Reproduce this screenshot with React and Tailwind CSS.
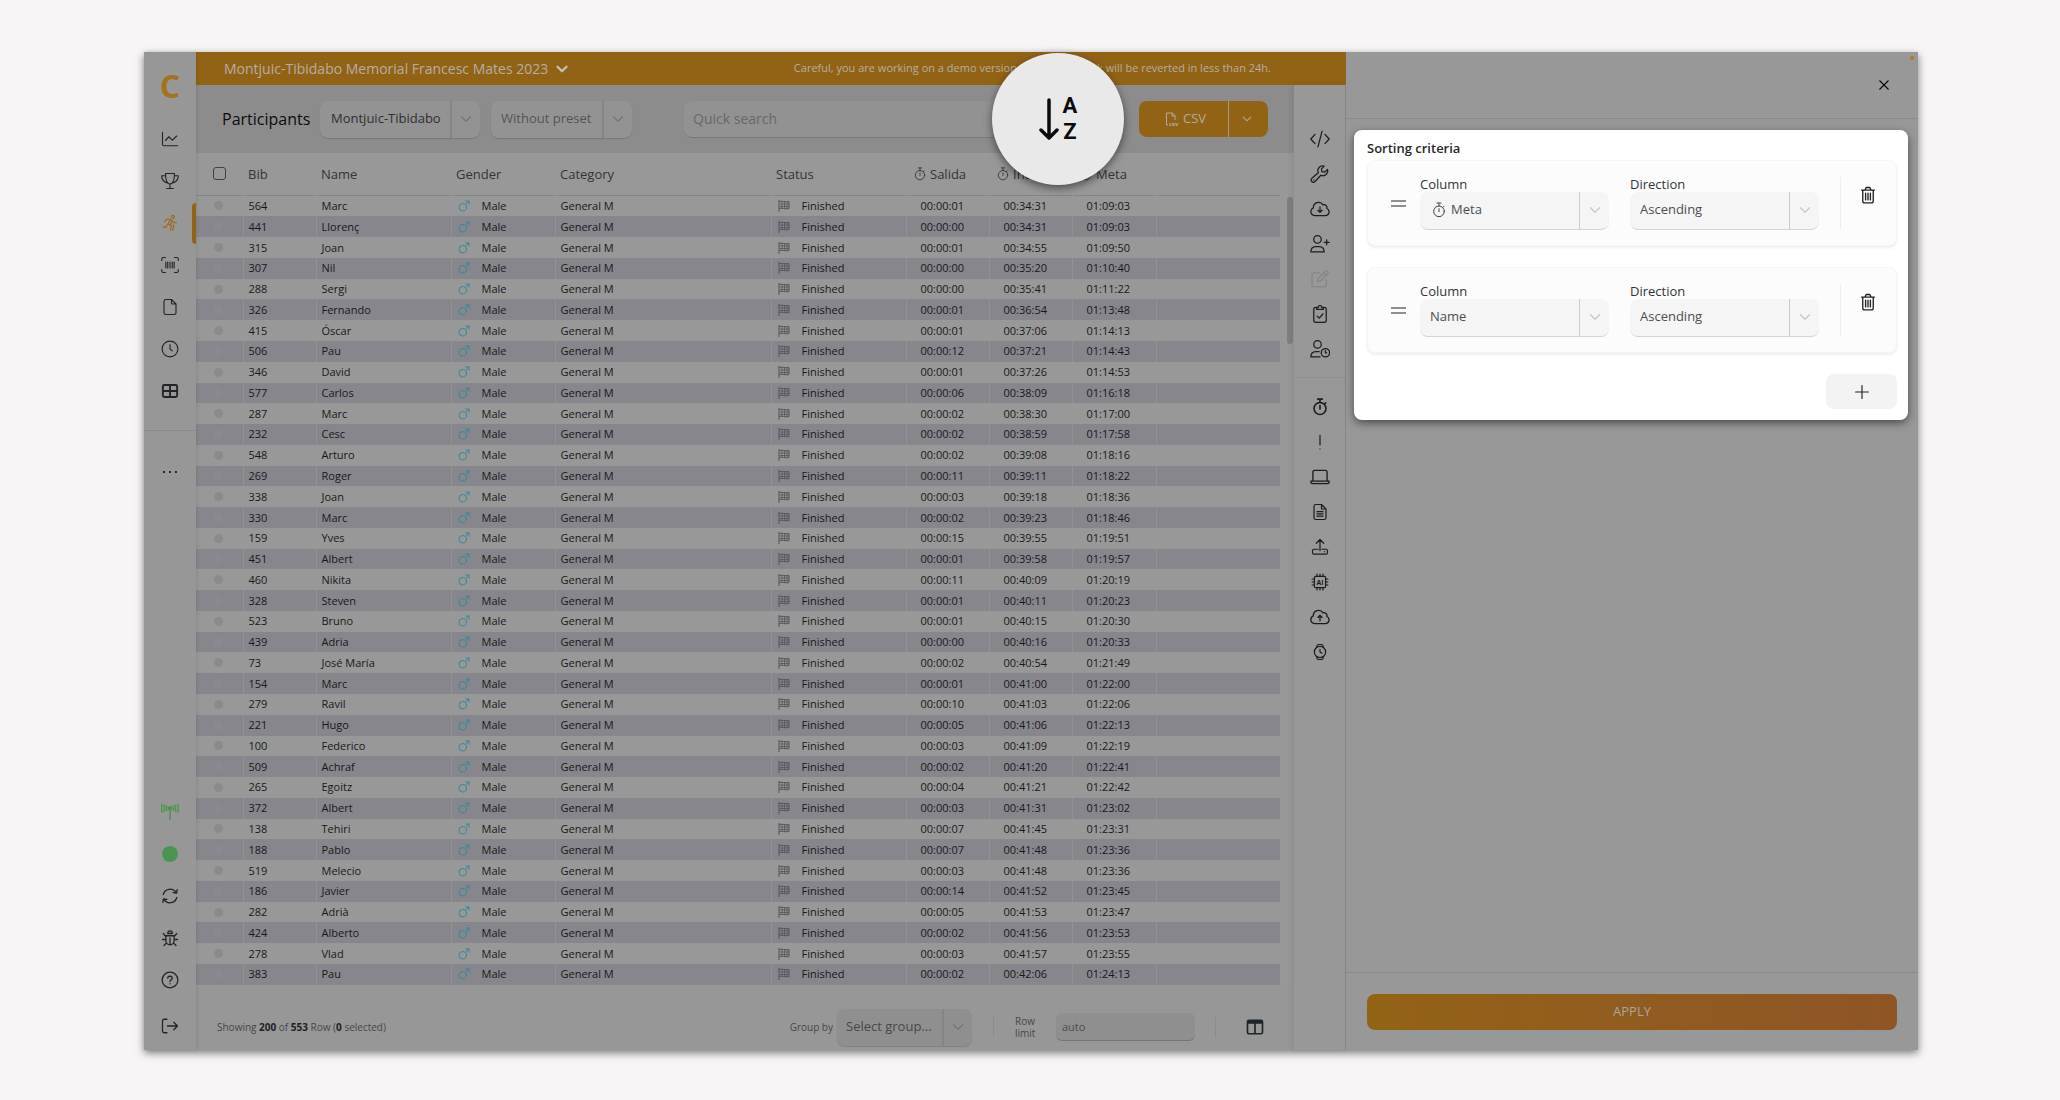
import { BsChevronDown } from 'react-icons/bs';

const participants = [
  [564, 'Marc', '00:00:01', '00:34:31', '01:09:03'],
  [441, 'Llorenç', '00:00:00', '00:34:31', '01:09:03'],
  [315, 'Joan', '00:00:01', '00:34:55', '01:09:50'],
  [307, 'Nil', '00:00:00', '00:35:20', '01:10:40'],
  [288, 'Sergi', '00:00:00', '00:35:41', '01:11:22'],
  [326, 'Fernando', '00:00:01', '00:36:54', '01:13:48'],
  [415, 'Óscar', '00:00:01', '00:37:06', '01:14:13'],
  [506, 'Pau', '00:00:12', '00:37:21', '01:14:43'],
  [346, 'David', '00:00:01', '00:37:26', '01:14:53'],
  [577, 'Carlos', '00:00:06', '00:38:09', '01:16:18'],
  [287, 'Marc', '00:00:02', '00:38:30', '01:17:00'],
  [232, 'Cesc', '00:00:02', '00:38:59', '01:17:58'],
  [548, 'Arturo', '00:00:02', '00:39:08', '01:18:16'],
  [269, 'Roger', '00:00:11', '00:39:11', '01:18:22'],
  [338, 'Joan', '00:00:03', '00:39:18', '01:18:36'],
  [330, 'Marc', '00:00:02', '00:39:23', '01:18:46'],
  [159, 'Yves', '00:00:15', '00:39:55', '01:19:51'],
  [451, 'Albert', '00:00:01', '00:39:58', '01:19:57'],
  [460, 'Nikita', '00:00:11', '00:40:09', '01:20:19'],
  [328, 'Steven', '00:00:01', '00:40:11', '01:20:23'],
  [523, 'Bruno', '00:00:01', '00:40:15', '01:20:30'],
  [439, 'Adria', '00:00:00', '00:40:16', '01:20:33'],
  [73, 'José María', '00:00:02', '00:40:54', '01:21:49'],
  [154, 'Marc', '00:00:01', '00:41:00', '01:22:00'],
  [279, 'Ravil', '00:00:10', '00:41:03', '01:22:06'],
  [221, 'Hugo', '00:00:05', '00:41:06', '01:22:13'],
  [100, 'Federico', '00:00:03', '00:41:09', '01:22:19'],
  [509, 'Achraf', '00:00:02', '00:41:20', '01:22:41'],
  [265, 'Egoitz', '00:00:04', '00:41:21', '01:22:42'],
  [372, 'Albert', '00:00:03', '00:41:31', '01:23:02'],
  [138, 'Tehiri', '00:00:07', '00:41:45', '01:23:31'],
  [188, 'Pablo', '00:00:07', '00:41:48', '01:23:36'],
  [519, 'Melecio', '00:00:03', '00:41:48', '01:23:36'],
  [186, 'Javier', '00:00:14', '00:41:52', '01:23:45'],
  [282, 'Adrià', '00:00:05', '00:41:53', '01:23:47'],
  [424, 'Alberto', '00:00:02', '00:41:56', '01:23:53'],
  [278, 'Vlad', '00:00:03', '00:41:57', '01:23:55'],
  [383, 'Pau', '00:00:02', '00:42:06', '01:24:13'],
];

// All line icons share a 24px grid
function Icon({ children, className = 'size-5', weight = 1.5 }) {
  return (
    <svg
      viewBox="0 0 24 24"
      fill="none"
      stroke="currentColor"
      strokeWidth={weight}
      strokeLinecap="round"
      strokeLinejoin="round"
      className={className}
      aria-hidden="true"
    >
      {children}
    </svg>
  );
}

const cloud = 'M5.5 20h13a4.5 4.5 0 0 0 1.7-8.6 3.6 3.6 0 0 0-4.6-4.4A6.3 6.3 0 0 0 4 10.6 4.9 4.9 0 0 0 5.5 20Z';

const icons = {
  chart: <path d="M2 3v16a2 2 0 0 0 2 2h18M6 14l4.5-5 4.5 4.5L21 8" />,
  trophy: <path d="M6 2h12c0 7-1.5 14-6 14S6 9 6 2ZM6 5H1c0 5 3 8.5 7.5 9.5M18 5h5c0 5-3 8.5-7.5 9.5M12 16v6M7.5 22h9" />,
  runner: (
    <>
      <circle cx="16" cy="3.8" r="2" />
      <path d="M5 10.5 7.500 7h5l2 1.500 2.500 3h3.500M12.500 7.500 9.500 13l4.500 3-1.500 6M15 9.500l-2.500 4.500M8.500 14l-1.500 3.500H3M16.500 14.500l.5 2-1.500 5.500" />
    </>
  ),
  barcode: (
    <path d="M1 6V4a2 2 0 0 1 2-2h3M18 2h3a2 2 0 0 1 2 2v2M23 18v2a2 2 0 0 1-2 2h-3M6 22H3a2 2 0 0 1-2-2v-2M6.500 8v8M9 8v8M12 8v8M15 8v8M17.500 8v8" />
  ),
  file: <path d="M14 2H6.500A2.500 2.500 0 0 0 4 4.500v15A2.500 2.500 0 0 0 6.500 22h11a2.500 2.500 0 0 0 2.500-2.500V8l-6-6ZM14 2v4.500A1.500 1.500 0 0 0 15.500 8H20" />,
  clock: (
    <>
      <circle cx="12" cy="12" r="10.5" />
      <path d="M12 6v6l3 2.500" />
    </>
  ),
  grid: (
    <>
      <rect x="2.5" y="4" width="19" height="16" rx="2" />
      <path d="M2.500 12h19M12 4v16" />
    </>
  ),
  sync: <path d="M3 10a9.300 9.300 0 0 1 17-2.500M21.500 3.500 20.800 8.200l-4.600-.7M21 14a9.300 9.300 0 0 1-17 2.500M2.500 20.500l.7-4.700 4.600.7" />,
  bug: (
    <path d="M6.500 9h11v6.500a5.500 5.500 0 0 1-11 0V9ZM12 12v9M9 5.500a3 3 0 0 1 6 0V6H9v-.5ZM6.500 10 3 6M17.500 10 21 6M6.500 14H2M17.500 14H22M7.500 18.500 4 22M16.500 18.500 20 22" />
  ),
  help: (
    <>
      <circle cx="12" cy="12" r="10.5" />
      <path d="M9 9.500A2.500 2.500 0 0 1 11.500 7h1a2.500 2.500 0 0 1 1 4.800c-1 .5-1.500 1-1.500 2.200M12 17v.1" />
    </>
  ),
  logout: <path d="M8 3H4.500A2.500 2.500 0 0 0 2 5.500v13A2.500 2.500 0 0 0 4.500 21H8M8.500 12H22M17 7l5 5-5 5" />,
  code: <path d="m6 6.500-5 5.500 5 5.500M18 6.500l5 5.500-5 5.500M14.500 2.500l-5 19" />,
  wrench: (
    <>
      <path d="M21 6.500a5.800 5.800 0 0 1-8 7l-7 7.500a2.600 2.600 0 0 1-3.800-3.800L10 10.500a5.800 5.800 0 0 1 7-8l-3.200 3.300.5 3.400 3.400.5L21 6.500Z" />
      <path d="M4.500 19v.1" />
    </>
  ),
  cloudDown: <path d={`${cloud}M12 9.500v6.500M9.500 13.500 12 16l2.500-2.500`} />,
  cloudUp: <path d={`${cloud}M12 16.500V10M9.500 12.500 12 10l2.500 2.500`} />,
  userPlus: (
    <>
      <circle cx="9" cy="6.5" r="4.5" />
      <path d="M1 21.500c0-4 2.500-6.500 6-6.500h4c3.500 0 6 2.500 6 6.500H1ZM20 7v6M17 10h6" />
    </>
  ),
  userClock: (
    <>
      <circle cx="9" cy="6.5" r="4.5" />
      <path d="M12 21.500H1c0-4 2.500-6.500 6-6.500h4" />
      <circle cx="18.5" cy="16.5" r="5" />
      <path d="M18.500 14v2.500h1.500" />
    </>
  ),
  edit: <path d="M11 4.500H5A2.500 2.500 0 0 0 2.500 7v12A2.500 2.500 0 0 0 5 21.500h12a2.500 2.500 0 0 0 2.500-2.500v-6M9 15l.8-3.800 8.500-8.500a2 2 0 0 1 3 3l-8.500 8.500L9 15ZM16.500 4.500l3 3" />,
  clipboard: <path d="M8.500 4H7a2.500 2.500 0 0 0-2.500 2.500v13A2.500 2.500 0 0 0 7 22h10a2.500 2.500 0 0 0 2.500-2.500v-13A2.500 2.500 0 0 0 17 4h-1.500M8 6.500h8c0-1.500-1-2.500-2-2.500a2 2 0 0 0-4 0c-1 0-2 1-2 2.500ZM8.500 14.500l2.500 2.500 4.500-5" />,
  stopwatch: (
    <>
      <circle cx="12" cy="14" r="8" />
      <path d="M12 6V2M9 1.500h6M12 10v4.500M18 8l1.500-1.500" />
    </>
  ),
  alert: <path d="M12 3v13M12 21v.1" />,
  laptop: <path d="M3.500 16.500V6A2 2 0 0 1 5.500 4h13a2 2 0 0 1 2 2v10.500M1 17h22v1a2 2 0 0 1-2 2H3a2 2 0 0 1-2-2v-1Z" />,
  fileText: (
    <path d="M14 2H6.500A2.500 2.500 0 0 0 4 4.500v15A2.500 2.500 0 0 0 6.500 22h11a2.500 2.500 0 0 0 2.500-2.500V8l-6-6ZM14 2v6h6M8 11.500h8M8 14.500h8M8 17.500h8" />
  ),
  upload: <path d="M9.500 15H4a2 2 0 0 0-2 2v2.500a2 2 0 0 0 2 2h16a2 2 0 0 0 2-2V17a2 2 0 0 0-2-2h-5.500M12 17V2M7 7l5-5 5 5M18 18.200h.1" />,
  chip: (
    <>
      <rect x="4.5" y="4.5" width="15" height="15" rx="2" />
      <path d="M8 4V1.500M12 4V1.500M16 4V1.500M8 22.500V20M12 22.500V20M16 22.500V20M4 8H1.500M4 12H1.500M4 16H1.500M22.500 8H20M22.500 12H20M22.500 16H20" />
      <text x="12" y="15.500" textAnchor="middle" fontSize="9" fontWeight="700" stroke="none" fill="currentColor">AI</text>
    </>
  ),
  watch: (
    <>
      <circle cx="12" cy="12" r="7.5" />
      <path d="M12 8.500V12l2.500 1.500M7.500 6 8 3.500A2 2 0 0 1 10 2h4a2 2 0 0 1 2 1.500l.5 2.500M7.500 18l.5 2.500A2 2 0 0 0 10 22h4a2 2 0 0 0 2-1.500l.5-2.500" />
    </>
  ),
  trash: <path d="M3.500 5.500h17M5 5.500V20a2.500 2.500 0 0 0 2.500 2.500h9A2.500 2.500 0 0 0 19 20V5.500M8 5.500 9.500 2h5L16 5.500M8.800 9.500v9M12 9.500v9M15.200 9.500v9" />,
  columns: <path d="M4 3h16a2 2 0 0 1 2 2v14a2 2 0 0 1-2 2H4a2 2 0 0 1-2-2V5a2 2 0 0 1 2-2ZM2 5h20M2 6.500h20M12 6v15" />,
  male: (
    <>
      <circle cx="9.5" cy="14.500" r="7.5" />
      <path d="M15 9 22 2M15.500 2H22v6.500" />
    </>
  ),
};

function CheckeredFlag() {
  return (
    <svg viewBox="0 0 12 12" className="size-3 text-[#55555a]" fill="none" stroke="currentColor" aria-hidden="true">
      <path d="M1 0v12" strokeWidth="1" />
      <path d="M1 1.500c3-1 6 1 10 0v7c-4 1-7-1-10 0" strokeWidth="1" />
      <path d="M1.500 4h9.500M1.500 6.500h9.500M4 1v7.500M6.500 1v7.500M9 1.500v7.500" strokeWidth="0.800" />
    </svg>
  );
}

const mainNav = [
  ['Analytics', 'chart'],
  ['Results', 'trophy'],
  ['Participants', 'runner'],
  ['Scanner', 'barcode'],
  ['Documents', 'file'],
  ['Times', 'clock'],
  ['Tables', 'grid'],
];

const toolsTop = [
  ['Code', 'code'],
  ['Tools', 'wrench'],
  ['Download', 'cloudDown'],
  ['Add participant', 'userPlus'],
  ['Edit', 'edit'],
  ['Check', 'clipboard'],
  ['Participant times', 'userClock'],
];

const toolsBottom = [
  ['Stopwatch', 'stopwatch'],
  ['Incidents', 'alert'],
  ['Devices', 'laptop'],
  ['Report', 'fileText'],
  ['Upload', 'upload'],
  ['AI', 'chip'],
  ['Cloud upload', 'cloudUp'],
  ['Watch', 'watch'],
];

function Sidebar() {
  return (
    <nav className="z-10 flex w-[52px] shrink-0 flex-col items-center bg-[#979797] text-[#222427] shadow-[1px_0_3px_#0000001a]">
      <a href="#home" className="h-[66px] pt-3 text-[32px] leading-[44px] font-bold text-[#a5721a]">C</a>
      <div className="w-full">
        {mainNav.map(([label, name]) => (
          <a
            key={name}
            href={`#${name}`}
            aria-label={label}
            className={
              name === 'runner'
                ? 'relative flex h-[42px] items-center justify-center text-[#a06a13] after:absolute after:right-0 after:h-[41px] after:w-1 after:rounded-l after:bg-[#936315]'
                : 'flex h-[42px] items-center justify-center'
            }
          >
            <Icon className="size-[18px]" weight={name === 'grid' ? 2.5 : 1.5}>{icons[name]}</Icon>
          </a>
        ))}
      </div>
      <hr className="mt-[18px] w-full border-[#8b8b8b]" />
      <button aria-label="More" className="mt-5 flex h-[42px] items-center gap-1">
        <span className="size-[2px] rounded-full bg-black"></span>
        <span className="size-[2px] rounded-full bg-black"></span>
        <span className="size-[2px] rounded-full bg-black"></span>
      </button>
      <div className="mt-auto flex flex-col items-center pb-[3px]">
        <span className="flex h-[42px] items-center text-[#4c9550]">
          <Icon className="size-[18px]" weight={2}>
            <circle cx="12" cy="7" r="2" fill="currentColor" />
            <path d="M12 8v14M7.500 4v6M16.500 4v6M4.500 3v8M19.500 3v8M1.500 2c-1 3-1 7 0 10M22.500 2c1 3 1 7 0 10" />
          </Icon>
        </span>
        <span className="flex h-[42px] items-center">
          <span className="size-4 rounded-full bg-[#4c9550]"></span>
        </span>
        <button aria-label="Sync" className="flex h-[42px] items-center"><Icon className="size-[18px]" weight={1.7}>{icons.sync}</Icon></button>
        <button aria-label="Report a bug" className="flex h-[42px] items-center"><Icon className="size-[18px]" weight={1.7}>{icons.bug}</Icon></button>
        <button aria-label="Help" className="flex h-[42px] items-center"><Icon className="size-[18px]" weight={1.7}>{icons.help}</Icon></button>
        <button aria-label="Log out" className="mt-1 flex h-[42px] items-center"><Icon className="size-[18px]" weight={1.7}>{icons.logout}</Icon></button>
      </div>
    </nav>
  );
}

function DimSelect({ label, options, className, textClass }) {
  return (
    <div className={`flex h-[37px] shrink-0 rounded-lg shadow-[0_1px_1px_#00000026] ${className}`}>
      <select aria-label={label} className={`min-w-0 flex-1 appearance-none bg-transparent text-[13px] outline-none ${textClass}`}>
        {options.map(option => <option key={option}>{option}</option>)}
      </select>
      <span className="flex w-[30px] items-center justify-center border-l-2 border-[#858585] text-[#737373]">
        <BsChevronDown className="size-3 stroke-1" />
      </span>
    </div>
  );
}

function Toolbar() {
  return (
    <div className="flex h-[68px] shrink-0 items-center bg-[#8c8c8c] pr-[26px] pl-[26px]">
      <h1 className="w-[98px] text-base text-[#0c0c0d]">Participants</h1>
      <DimSelect label="Event" options={['Montjuic-Tibidabo']} className="w-[160px] bg-[#939393]" textClass="pl-[11px] text-[#2e2f31]" />
      <DimSelect label="Preset" options={['Without preset']} className="ml-[11px] w-[141px] bg-[#939393]" textClass="pl-[10px] text-[#525457]" />
      <input
        type="search"
        aria-label="Quick search"
        placeholder="Quick search"
        className="ml-[52px] h-[37px] min-w-0 flex-1 rounded-lg border-b border-[#777] bg-[#929292] px-[9px] text-sm outline-none placeholder:text-[#66696b]"
      />
      {/* Sort button, enlarged above the dimmed toolbar */}
      <div className="relative h-[37px] w-[81px] shrink-0">
        <button
          aria-label="Sort"
          className="absolute top-1/2 left-0 z-20 flex size-[132px] -translate-x-1/2 -translate-y-1/2 items-center justify-center gap-1 rounded-full bg-[#e9e9e9] text-[#0b0b0b] shadow-[0_3px_8px_#00000080]"
        >
          <svg viewBox="0 0 20 42" className="h-[42px] w-5" fill="none" stroke="currentColor" strokeWidth="3.500" strokeLinecap="round" strokeLinejoin="round">
            <path d="M10 2v37M2 32l8 8 8-8" />
          </svg>
          <span className="flex flex-col text-center font-[Roboto,sans-serif] text-[22px] leading-[26px] font-bold">
            <span>A</span>
            <span>Z</span>
          </span>
        </button>
      </div>
      <div className="flex h-9 w-[129px] shrink-0 rounded-lg bg-[#936315] text-[#aeaba6]">
        <button className="flex flex-1 items-center justify-center gap-1 pl-1 text-[13px]">
          <svg viewBox="0 0 14 14" className="size-[14px]" fill="none" stroke="currentColor" aria-hidden="true">
            <path d="M3 13H1.500V1h6L10 3.500V8M7 1v3h3" />
            <text x="4" y="13.500" fontSize="6" fontWeight="700" stroke="none" fill="currentColor">csv</text>
          </svg>
          CSV
        </button>
        <button aria-label="More export options" className="flex w-10 items-center justify-center border-l border-[#a39a88] pr-1">
          <BsChevronDown className="size-[10px] stroke-1" />
        </button>
      </div>
    </div>
  );
}

function TimeHeader({ label }) {
  return (
    <th className="pl-[7px] text-left font-normal">
      <span className="flex items-center gap-[3px]">
        <Icon className="size-[14px] shrink-0">{icons.stopwatch}</Icon>
        {label}
      </span>
    </th>
  );
}

function ParticipantsTable() {
  return (
    <div className="flex min-h-0 flex-1 bg-[#989898]">
      <table className="h-full w-full min-w-0 flex-1 table-fixed border-collapse text-[11px] leading-4 whitespace-nowrap text-[#17181a]">
        <colgroup>
          <col className="w-[47px]" />
          <col className="w-[73px]" />
          <col className="w-[135px]" />
          <col className="w-[104px]" />
          <col className="w-[216px]" />
          <col className="w-[135px]" />
          <col className="w-[83px]" />
          <col className="w-[83px]" />
          <col className="w-[84px]" />
          <col />
        </colgroup>
        <thead className="text-[13px] text-[#323437]">
          <tr className="h-[42px] border-b border-[#858585]">
            <th className="pl-[17px] text-left">
              <input type="checkbox" aria-label="Select all" className="block size-[13px] appearance-none rounded-[3px] border border-[#3f4144]" />
            </th>
            <th className="pl-[5px] text-left font-normal">Bib</th>
            <th className="pl-[5px] text-left font-normal">Name</th>
            <th className="pl-[5px] text-left font-normal">Gender</th>
            <th className="pl-[5px] text-left font-normal">Category</th>
            <th className="pl-[5px] text-left font-normal">Status</th>
            <TimeHeader label="Salida" />
            <TimeHeader label="Intermedio" />
            <TimeHeader label="Meta" />
            <th></th>
          </tr>
        </thead>
        <tbody>
          {participants.map(([bib, name, start, half, finish]) => (
            <tr key={bib} className="group even:bg-[#87868d]">
              <td className="pl-[18px]">
                <span className="block size-[9px] rounded-full bg-[#8b8b8b] group-even:bg-[#8a898f]"></span>
              </td>
              <td className="border-l border-transparent pl-[5px] group-even:border-[#929196]">{bib}</td>
              <td className="border-l border-transparent pl-[5px] group-even:border-[#929196]">{name}</td>
              <td className="border-l border-transparent pl-[6px] group-even:border-[#929196]">
                <span className="flex items-center gap-3">
                  <Icon className="size-3 text-[#2f8a9c]" weight={2}>{icons.male}</Icon>
                  Male
                </span>
              </td>
              <td className="border-l border-transparent pl-[5px] group-even:border-[#929196]">General M</td>
              <td className="border-l border-transparent pl-[6px] group-even:border-[#929196]">
                <span className="flex items-center gap-3">
                  <CheckeredFlag />
                  Finished
                </span>
              </td>
              <td className="border-l border-transparent pl-[14px] group-even:border-[#929196]">{start}</td>
              <td className="border-l border-transparent pl-[14px] group-even:border-[#929196]">{half}</td>
              <td className="border-l border-transparent pl-[14px] group-even:border-[#929196]">{finish}</td>
              <td className="border-l border-transparent group-even:border-[#929196]"></td>
            </tr>
          ))}
        </tbody>
      </table>
      <div className="flex w-[14px] shrink-0 justify-end pt-[44px]">
        <div className="mr-px h-[147px] w-[6px] rounded-full bg-[#7f7f7f]"></div>
      </div>
    </div>
  );
}

function Footer() {
  return (
    <footer className="flex h-[65px] shrink-0 items-center bg-[#979797] pt-[19px] pr-[30px] pl-[21px] text-[10px] text-[#45474a]">
      <p className="mr-auto">
        Showing <b className="text-[#1f2124]">200</b> of <b className="text-[#1f2124]">553</b> Row (<b className="text-[#1f2124]">0</b> selected)
      </p>
      <span className="mr-1">Group by</span>
      <DimSelect label="Group by" options={['Select group...']} className="w-[135px] bg-[#8f8f8f]" textClass="pl-[9px] text-[#46484b]" />
      <span className="mx-[21px] h-5 w-px bg-[#8b8b8b]"></span>
      <label htmlFor="row-limit" className="w-[41px] leading-3">Row<br />limit</label>
      <input
        id="row-limit"
        type="text"
        placeholder="auto"
        className="h-7 w-[139px] rounded-md border-b border-[#757575] bg-[#8f8f8f] px-[6px] text-[11px] outline-none placeholder:text-[#4c4e51]"
      />
      <span className="mr-[30px] ml-5 h-5 w-px bg-[#8b8b8b]"></span>
      <button aria-label="Columns" className="text-[#1f2429]">
        <Icon className="size-[18px]" weight={2.2}>{icons.columns}</Icon>
      </button>
    </footer>
  );
}

function ToolRail() {
  return (
    <aside className="flex w-[52px] shrink-0 flex-col border-r border-[#858585] bg-[#989898] pt-9 text-[#1b1c1e] shadow-[-2px_0_6px_#00000014]">
      {toolsTop.map(([label, name]) => (
        <button
          key={name}
          aria-label={label}
          disabled={name === 'edit'}
          className="flex h-[35px] items-center justify-center disabled:text-[#858585]"
        >
          <Icon>{icons[name]}</Icon>
        </button>
      ))}
      <hr className="mt-[11px] mb-[11px] border-[#8e8e8e]" />
      {toolsBottom.map(([label, name]) => (
        <button key={name} aria-label={label} className="flex h-[35px] items-center justify-center">
          <Icon
            className={name === 'laptop' || name === 'cloudUp' ? 'size-5' : 'size-[18px]'}
            weight={name === 'stopwatch' ? 2.2 : 1.6}
          >
            {icons[name]}
          </Icon>
        </button>
      ))}
    </aside>
  );
}

function SortField({ id, label, value, icon }) {
  return (
    <div className="min-w-0 flex-1">
      <label htmlFor={id} className="block text-[13px] leading-[15px] text-[#323538]">{label}</label>
      <div className="flex h-[38px] items-center rounded-lg border-b border-[#d4d4d4] bg-[#f5f5f5]">
        {icon && <Icon className="ml-[11px] size-4 text-[#444]">{icon}</Icon>}
        <select
          id={id}
          className={
            icon
              ? 'min-w-0 flex-1 appearance-none pl-1 text-[13px] text-[#4b4d50] outline-none'
              : 'min-w-0 flex-1 appearance-none pl-[10px] text-[13px] text-[#4b4d50] outline-none'
          }
        >
          <option>{value}</option>
        </select>
        <span className="flex w-[30px] items-center justify-center self-stretch border-l border-[#ccc] text-[#c4c4c4]">
          <BsChevronDown className="size-3 stroke-1" />
        </span>
      </div>
    </div>
  );
}

function SortRow({ id, column, icon }) {
  return (
    <li className="flex h-[86px] items-center rounded-lg border border-[#f5f5f5] bg-[#fcfcfc] pr-[19px] pl-[23px] shadow-[0_2px_3px_#00000012]">
      <button aria-label="Reorder" className="mr-[14px] flex w-[15px] flex-col gap-[3px]">
        <span className="h-[2px] w-full bg-[#8b9094]"></span>
        <span className="h-[2px] w-full bg-[#8b9094]"></span>
      </button>
      <div className="flex flex-1 gap-[21px]">
        <SortField id={`${id}-column`} label="Column" value={column} icon={icon} />
        <SortField id={`${id}-direction`} label="Direction" value="Ascending" />
      </div>
      <span className="mr-[18px] ml-[21px] h-[52px] w-px bg-[#eee]"></span>
      <button aria-label={`Remove ${column}`} className="mb-4 text-[#222]">
        <Icon className="size-[18px]" weight={1.8}>{icons.trash}</Icon>
      </button>
    </li>
  );
}

function SortPanel() {
  return (
    <section className="flex w-[572px] shrink-0 flex-col bg-[#989898]">
      <div className="relative flex h-[67px] shrink-0 items-center justify-end border-b border-[#898989] pr-[29px]">
        <span className="absolute top-1 right-1 size-1 rounded-full bg-[#b57b1c]"></span>
        <button aria-label="Close" className="text-black">
          <Icon className="size-[10px]" weight={3}><path d="M2 2l20 20M22 2 2 22" /></Icon>
        </button>
      </div>

      <div className="mt-[11px] mr-[10px] ml-2 rounded-lg bg-white pt-[10px] pr-[11px] pb-[11px] pl-[13px] shadow-[0_3px_8px_#00000080]">
        <h2 className="mb-[3px] text-[13px] leading-[17px] font-semibold text-[#26282b]">Sorting criteria</h2>
        <ul className="flex flex-col gap-[21px]">
          <SortRow id="first" column="Meta" icon={icons.stopwatch} />
          <SortRow id="second" column="Name" />
        </ul>
        <div className="mt-[21px] flex justify-end">
          <button aria-label="Add criterion" className="flex h-[35px] w-[71px] items-center justify-center rounded-lg bg-[#f3f3f3] text-[#222]">
            <Icon className="size-[14px]" weight={2}><path d="M12 1v22M1 12h22" /></Icon>
          </button>
        </div>
      </div>

      <div className="mt-auto border-t border-[#898989] px-[21px] pt-[21px] pb-5">
        <button className="block h-9 w-full rounded-lg bg-linear-to-r from-[#936315] to-[#8f5526] text-[13px] text-[#a9a5a0]">
          APPLY
        </button>
      </div>
    </section>
  );
}

export default function App() {
  return (
    <div className="flex min-h-screen bg-[#f7f5f6] pt-[52px] pr-[142px] pb-[50px] pl-[144px] font-['Open_Sans',sans-serif]">
      <div className="flex min-w-0 flex-1 shadow-[0_3px_8px_#00000080]">
        <Sidebar />
        <div className="flex min-w-0 flex-1 flex-col">
          <header className="flex h-[33px] shrink-0 items-center justify-between bg-[#936315] pr-[75px] pl-7 text-[#b3aea6]">
            <button className="flex items-center gap-2 text-sm">
              Montjuic-Tibidabo Memorial Francesc Mates 2023
              <BsChevronDown className="size-3 stroke-2 text-[#c4c0ba]" />
            </button>
            <p className="text-[11px] font-medium">Careful, you are working on a demo version. All of your work will be reverted in less than 24h.</p>
          </header>
          <div className="flex min-h-0 flex-1">
            <main className="flex min-w-0 flex-1 flex-col">
              <Toolbar />
              <ParticipantsTable />
              <Footer />
            </main>
            <ToolRail />
          </div>
        </div>
        <SortPanel />
      </div>
    </div>
  );
}
